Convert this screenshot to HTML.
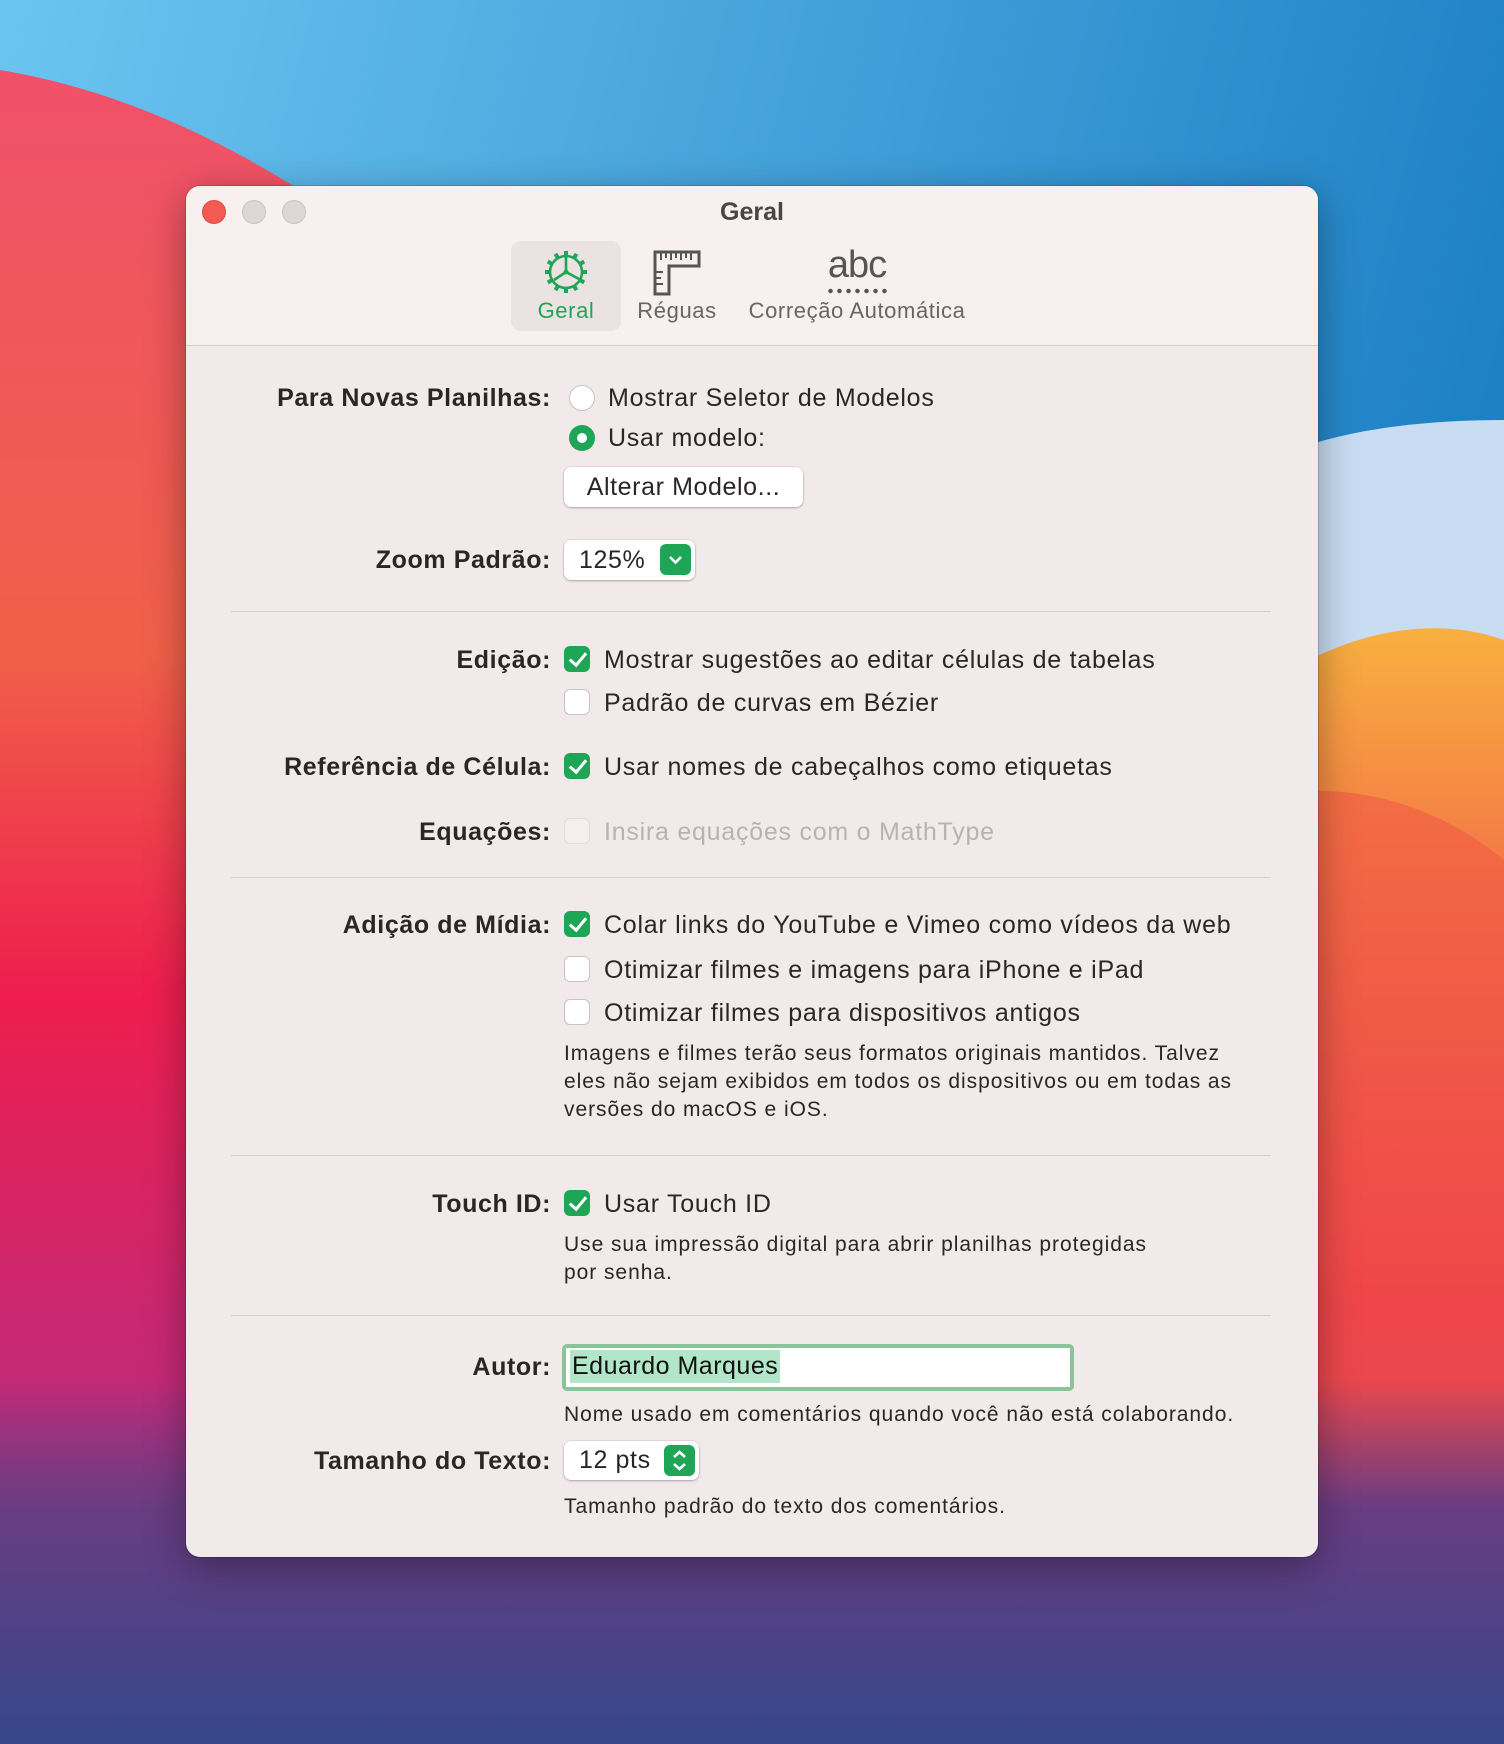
<!DOCTYPE html>
<html><head><meta charset="utf-8"><style>
*{margin:0;padding:0;box-sizing:border-box}
body{width:1504px;height:1744px;overflow:hidden;position:relative;font-family:"Liberation Sans",sans-serif;background:#3a4c8c}
#bg{position:absolute;left:0;top:0}
.win{position:absolute;left:186px;top:186px;width:1132px;height:1371px;border-radius:14px;background:#f2eaea;box-shadow:0 10px 40px rgba(0,0,0,.35),0 0 0 1px rgba(0,0,0,.15);overflow:hidden}
.tb{position:absolute;left:0;top:0;width:100%;height:160px;background:#f8efef;border-bottom:1px solid #d6cfcf}
.tl{position:absolute;top:14px;width:24px;height:24px;border-radius:50%}
.title{position:absolute;top:12px;left:0;width:100%;text-align:center;font-weight:bold;font-size:25px;color:#4a4444}
.sel{position:absolute;left:325px;top:55px;width:110px;height:90px;border-radius:10px;background:#ebe2e2}
.tlab{position:absolute;top:112px;font-size:22px;color:#666;text-align:center;letter-spacing:.6px;white-space:nowrap}
.lab{position:absolute;right:767px;font-weight:bold;font-size:25px;color:#2a2626;height:30px;line-height:30px;white-space:nowrap;letter-spacing:.6px}
.txt{position:absolute;left:418px;font-size:25px;color:#2a2626;height:30px;line-height:30px;white-space:nowrap;letter-spacing:.75px}
.note{position:absolute;left:378px;font-size:21px;color:#2a2626;line-height:28px;letter-spacing:.95px;white-space:nowrap}
.cb{position:absolute;left:378px;width:26px;height:26px;border-radius:6px;background:#fff;border:1px solid #c8c2c2}
.cb.on{background:#1ea656;border-color:#1ea656}
.cb.on::after{content:"";position:absolute;left:8px;top:2px;width:7px;height:14px;border:solid #fff;border-width:0 3px 3px 0;transform:rotate(40deg)}
.cb.dis{background:#f4eeee;border-color:#e2dcdc}
.sep{position:absolute;left:45px;width:1040px;height:1px;background:#d6cfcf}
.btn{position:absolute;background:#fff;border-radius:7px;box-shadow:0 1px 2px rgba(0,0,0,.25),0 0 0 .5px rgba(0,0,0,.12);font-size:25px;color:#2a2626;letter-spacing:.6px}
.arr{position:absolute;right:4px;top:4px;width:31px;height:31px;border-radius:6px;background:#1ea656}
</style></head><body>
<svg id="bg" width="1504" height="1744" viewBox="0 0 1504 1744">
<defs>
<linearGradient id="sky" x1="0" y1="0" x2="1" y2="0.3"><stop offset="0" stop-color="#6cc4f0"/><stop offset="1" stop-color="#1c7fc4"/></linearGradient>
<linearGradient id="red" x1="0" y1="0" x2="0" y2="1"><stop offset="0" stop-color="#f0506a"/><stop offset=".35" stop-color="#f06048"/><stop offset=".55" stop-color="#ee1e4e"/><stop offset=".8" stop-color="#c02a7a"/><stop offset="1" stop-color="#7a3a80"/></linearGradient>
<linearGradient id="bot" x1="0" y1="0" x2="0" y2="1"><stop offset="0" stop-color="#6a3c82" stop-opacity="0"/><stop offset=".35" stop-color="#6a3c82"/><stop offset="1" stop-color="#35478a"/></linearGradient>
<linearGradient id="rband" x1="0" y1="0" x2="0" y2="1"><stop offset="0" stop-color="#f8b040"/><stop offset=".3" stop-color="#f26448"/><stop offset=".6" stop-color="#ee2a52"/><stop offset="1" stop-color="#b03080"/></linearGradient>
</defs>
<rect width="1504" height="1744" fill="url(#sky)"/>
<path d="M1504 420 C1420 420 1320 430 1250 470 L1250 1744 L1504 1744 Z" fill="#c8dcf2"/>
<path d="M1504 640 C1420 610 1320 640 1250 700 L1250 1744 L1504 1744 Z" fill="url(#rband)"/>
<path d="M1504 860 C1420 790 1320 780 1250 800 L1250 1744 L1504 1744 Z" fill="#f05a44" opacity=".6"/>
<path d="M0 70 C120 90 220 140 300 190 L300 1744 L0 1744 Z" fill="url(#red)"/>
<rect x="0" y="1380" width="1504" height="364" fill="url(#bot)"/>
</svg>
<div class="win">
 <div class="tb">
  <div class="tl" style="left:16px;background:#f25a52;border:1px solid #dd4a42"></div>
  <div class="tl" style="left:56px;background:#dcd6d6;border:1px solid #c8c2c2"></div>
  <div class="tl" style="left:96px;background:#dcd6d6;border:1px solid #c8c2c2"></div>
  <div class="title">Geral</div>
  <div class="sel"></div>
  <svg style="position:absolute;left:357px;top:63px" width="46" height="46" viewBox="0 0 46 46">
   <g fill="none" stroke="#1ea656" stroke-width="2.6">
    <circle cx="23" cy="23" r="16"/>
    <path d="M23 23 L23 8 M23 23 L36 30 M23 23 L11 31"/>
   </g>
   <g fill="#1ea656"><circle cx="23" cy="23" r="2.5"/>
   <g id="t"><rect x="21" y="2" width="4" height="5"/></g>
   <use href="#t" transform="rotate(30 23 23)"/><use href="#t" transform="rotate(60 23 23)"/><use href="#t" transform="rotate(90 23 23)"/><use href="#t" transform="rotate(120 23 23)"/><use href="#t" transform="rotate(150 23 23)"/><use href="#t" transform="rotate(180 23 23)"/><use href="#t" transform="rotate(210 23 23)"/><use href="#t" transform="rotate(240 23 23)"/><use href="#t" transform="rotate(270 23 23)"/><use href="#t" transform="rotate(300 23 23)"/><use href="#t" transform="rotate(330 23 23)"/></g>
  </svg>
  <div class="tlab" style="left:325px;width:110px;color:#1ea656">Geral</div>
  <svg style="position:absolute;left:466px;top:63px" width="50" height="48" viewBox="0 0 50 48">
   <g fill="none" stroke="#555" stroke-width="3">
    <path d="M3 3 H47 V17 H17 V45 H3 Z"/>
    <path d="M9 4 V11 M14 4 V9 M19 4 V11 M24 4 V9 M29 4 V11 M34 4 V9 M39 4 V11 M4 23 H11 M4 29 H9 M4 35 H11" stroke-width="2"/>
   </g>
  </svg>
  <div class="tlab" style="left:436px;width:110px">Réguas</div>
  <div style="position:absolute;left:626px;top:58px;width:90px;text-align:center;font-size:38px;color:#555;letter-spacing:-1px">abc</div>
  <div style="position:absolute;left:640px;top:102px;width:63px;height:6px;background:radial-gradient(circle,#555 2px,transparent 2.5px) 0 0/9px 6px repeat-x"></div>
  <div class="tlab" style="left:546px;width:250px">Correção Automática</div>
 </div>

 <div class="lab" style="top:197px">Para Novas Planilhas:</div>
 <div style="position:absolute;left:383px;top:199px;width:26px;height:26px;border-radius:50%;background:#fff;border:1px solid #c8c2c2"></div>
 <div class="txt" style="left:422px;top:197px">Mostrar Seletor de Modelos</div>
 <div style="position:absolute;left:383px;top:239px;width:26px;height:26px;border-radius:50%;background:#1ea656"><div style="position:absolute;left:8px;top:8px;width:10px;height:10px;border-radius:50%;background:#fff"></div></div>
 <div class="txt" style="left:422px;top:237px">Usar modelo:</div>
 <div class="btn" style="left:378px;top:281px;width:239px;height:40px;line-height:40px;text-align:center">Alterar Modelo...</div>

 <div class="lab" style="top:359px">Zoom Padrão:</div>
 <div class="btn" style="left:378px;top:354px;width:131px;height:40px;line-height:40px;padding-left:15px">125%<div class="arr"><svg width="31" height="31"><path d="M10 13 L15.5 18.5 L21 13" fill="none" stroke="#fff" stroke-width="2.6"/></svg></div></div>

 <div class="sep" style="top:425px"></div>
 <div class="lab" style="top:459px">Edição:</div>
 <div class="cb on" style="top:460px"></div><div class="txt" style="top:459px">Mostrar sugestões ao editar células de tabelas</div>
 <div class="cb" style="top:503px"></div><div class="txt" style="top:502px">Padrão de curvas em Bézier</div>
 <div class="lab" style="top:566px">Referência de Célula:</div>
 <div class="cb on" style="top:567px"></div><div class="txt" style="top:566px">Usar nomes de cabeçalhos como etiquetas</div>
 <div class="lab" style="top:631px">Equações:</div>
 <div class="cb dis" style="top:632px"></div><div class="txt" style="top:631px;color:#b8b2b2">Insira equações com o MathType</div>

 <div class="sep" style="top:691px"></div>
 <div class="lab" style="top:724px">Adição de Mídia:</div>
 <div class="cb on" style="top:725px"></div><div class="txt" style="top:724px">Colar links do YouTube e Vimeo como vídeos da web</div>
 <div class="cb" style="top:770px"></div><div class="txt" style="top:769px">Otimizar filmes e imagens para iPhone e iPad</div>
 <div class="cb" style="top:813px"></div><div class="txt" style="top:812px">Otimizar filmes para dispositivos antigos</div>
 <div class="note" style="top:854px">Imagens e filmes terão seus formatos originais mantidos. Talvez<br>eles não sejam exibidos em todos os dispositivos ou em todas as<br>versões do macOS e iOS.</div>

 <div class="sep" style="top:969px"></div>
 <div class="lab" style="top:1003px">Touch ID:</div>
 <div class="cb on" style="top:1004px"></div><div class="txt" style="top:1003px">Usar Touch ID</div>
 <div class="note" style="top:1045px">Use sua impressão digital para abrir planilhas protegidas<br>por senha.</div>

 <div class="sep" style="top:1129px"></div>
 <div class="lab" style="top:1166px">Autor:</div>
 <div style="position:absolute;left:376px;top:1158px;width:512px;height:47px;border-radius:5px;background:#8cc49a;padding:4px">
  <div style="width:100%;height:100%;background:#fff;padding:2px 4px"><span style="background:#b2e6c8;font-size:25px;color:#111;line-height:33px;display:inline-block;padding:0 2px;letter-spacing:.5px">Eduardo Marques</span></div>
 </div>
 <div class="note" style="top:1215px">Nome usado em comentários quando você não está colaborando.</div>
 <div class="lab" style="top:1260px">Tamanho do Texto:</div>
 <div class="btn" style="left:378px;top:1255px;width:135px;height:39px;line-height:39px;padding-left:15px">12 pts<div class="arr" style="top:4px"><svg width="31" height="31"><path d="M10 12 L15.5 7 L21 12 M10 19 L15.5 24 L21 19" fill="none" stroke="#fff" stroke-width="2.6"/></svg></div></div>
 <div class="note" style="top:1307px">Tamanho padrão do texto dos comentários.</div>
</div>
</body></html>
